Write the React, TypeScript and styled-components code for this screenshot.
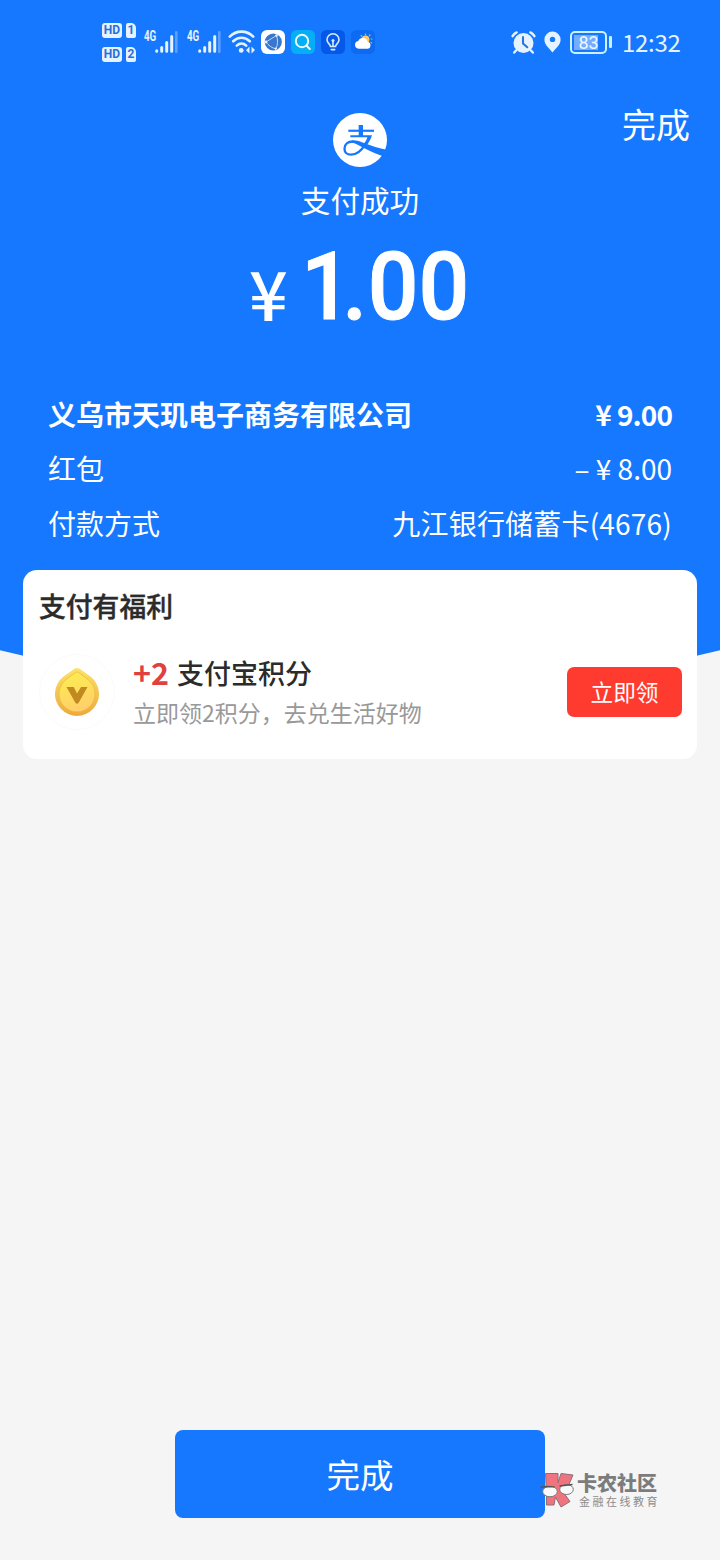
import React from "react";
import styled, { createGlobalStyle } from "styled-components";

const BLUE = "#1677ff";
const ICE = "#e4f3ff";

const Global = createGlobalStyle`
  * { box-sizing: border-box; }
  body {
    margin: 0;
    background: #f5f5f5;
    font-family: "Noto Sans CJK SC", "Noto Sans", sans-serif;
  }
`;

const Page = styled.div`
  position: relative;
  width: 720px;
  height: 1560px;
  display: flex;
  flex-direction: column;
  align-items: center;
  background: #f5f5f5;
  overflow: hidden;
`;

const Hero = styled.header`
  width: 100%;
  height: 695px;
  flex: none;
  background: ${BLUE};
  color: #fff;
  clip-path: circle(1500px at 50% -806px);
`;

const StatusBar = styled.div`
  height: 84px;
  padding: 0 40px 0 102px;
  display: flex;
  align-items: center;
  justify-content: space-between;
`;

const StatusGroup = styled.div<{ $gap: number }>`
  display: flex;
  align-items: center;
  gap: ${(p) => p.$gap}px;
`;

const SimStack = styled.div`
  display: flex;
  flex-direction: column;
  gap: 9px;
  margin-right: 7px;
`;

const SimRow = styled.div`
  display: flex;
  gap: 4px;
`;

const SimBadge = styled.span<{ $w: number; $notch?: boolean }>`
  width: ${(p) => p.$w}px;
  height: 15px;
  border-radius: ${(p) => (p.$notch ? "2px 5px 2px 2px" : "3px")};
  background: ${ICE};
  color: #2a6fdc;
  font: 700 12px/15px Roboto, sans-serif;
  text-align: center;
`;

const Signal = styled.div`
  display: flex;
  align-items: flex-start;
  height: 22px;
  width: 35px;
  margin-right: 8px;

  & + & {
    margin-right: 7px;
  }
`;

const Net = styled.span`
  width: 12px;
  font: 700 14px/11px Roboto, sans-serif;
  transform: translateX(1px) scaleX(0.7);
  transform-origin: 0 50%;
  color: ${ICE};
`;

const Clock = styled.span`
  width: 58px;
  margin-left: 2px;
  font-size: 24px;
  line-height: 28px;
  letter-spacing: -0.3px;
  color: ${ICE};
  white-space: nowrap;
`;

const Battery = styled.div`
  display: flex;
  align-items: center;
  gap: 2px;
`;

const BatteryShell = styled.div`
  width: 37px;
  height: 23px;
  padding: 2px;
  border: 2px solid #c9f1ff;
  border-radius: 5px;
`;

const BatteryFill = styled.div`
  width: 100%;
  height: 15px;
  background: linear-gradient(90deg, #74adff 0 84%, transparent 84%);
  color: #eef8ff;
  font: 400 18px/16px Roboto, sans-serif;
  text-align: center;
`;

const BatteryCap = styled.div`
  width: 3px;
  height: 12px;
  border-radius: 1px;
  background: #c9f1ff;
`;

const TopAction = styled.div`
  height: 29px;
  padding: 15px 30px 0 0;
  font-size: 34px;
  line-height: 50px;
  text-align: right;
`;

const Summary = styled.section`
  display: flex;
  flex-direction: column;
  align-items: center;
`;

const ResultText = styled.div`
  margin-top: 11px;
  font-size: 29.6px;
  line-height: 44px;
`;

const Amount = styled.div`
  display: flex;
  align-items: flex-end;
  height: 113px;
  width: 220px;
`;

const Yen = styled.span`
  width: 52px;
  margin: 0 13px 10px -1px;
  font: 500 68px/66px "Noto Sans CJK SC", sans-serif;
`;

const Figure = styled.span`
  display: flex;
  font: 500 95px/97px Roboto, sans-serif;
  -webkit-text-stroke: 1px #fff;
  transform: scaleX(0.94);
  transform-origin: 0 50%;
  white-space: nowrap;
`;

const Glyph = styled.span<{ $track?: number }>`
  letter-spacing: ${(p) => p.$track ?? 0}px;
`;

const Details = styled.dl`
  margin: 53px 48px 0;
`;

const DetailRow = styled.div<{ $strong?: boolean }>`
  display: flex;
  justify-content: space-between;
  height: 54.3px;
  font-size: 28px;
  line-height: 52px;
  font-weight: ${(p) => (p.$strong ? 700 : 400)};
`;

const Label = styled.dt`
  line-height: 53px;
`;
const Value = styled.dd<{ $track?: number }>`
  margin: 0;
  letter-spacing: ${(p) => p.$track ?? 0}px;
`;

const MiniYen = styled.span`
  display: inline-block;
  width: 28px;
  text-align: center;
`;

const Card = styled.section`
  position: relative;
  width: 674px;
  height: 189px;
  margin-top: -125px;
  padding: 16px 15px 0 16px;
  border-radius: 14px;
  background: #fff;
  flex: none;
`;

const CardTitle = styled.h2`
  margin: 0;
  font-size: 26.8px;
  line-height: 40px;
  font-weight: 500;
  color: #2b2b2b;
  -webkit-text-stroke: 0.4px #2b2b2b;
`;

const Reward = styled.div`
  display: flex;
  align-items: center;
  margin-top: 22px;
  height: 88px;
`;

const CoinFrame = styled.div`
  width: 76px;
  height: 76px;
  border-radius: 50%;
  border: 1px solid #fbfbfb;
  display: flex;
  align-items: center;
  justify-content: center;
`;

const RewardText = styled.div`
  flex: 1;
  padding-left: 18px;
`;

const RewardTitle = styled.div`
  display: flex;
  gap: 8px;
  height: 40px;
  font-size: 27px;
  line-height: 37px;
  font-weight: 500;
  color: #2b2b2b;
`;

const Plus = styled.span`
  color: #e04040;
  font-weight: 700;
  font-size: 30.5px;
  line-height: 37px;
`;

const RewardNote = styled.div`
  font-size: 23px;
  line-height: 36px;
  color: #999;
`;

const ClaimButton = styled.button`
  width: 115px;
  height: 50px;
  padding: 0;
  border: 0;
  border-radius: 7px;
  background: #ff3b30;
  color: #fff;
  font: 400 22.7px/48px "Noto Sans CJK SC", sans-serif;
`;

const DoneButton = styled.button`
  width: 370px;
  height: 88px;
  margin: auto 0 42px;
  padding: 0;
  border: 0;
  border-radius: 8px;
  background: ${BLUE};
  color: #fff;
  font: 400 33.5px/88px "Noto Sans CJK SC", sans-serif;
`;

const Watermark = styled.div`
  position: absolute;
  left: 540px;
  top: 1471px;
  display: flex;
  gap: 3px;
`;

const WatermarkName = styled.div`
  font: 900 20px/27px "Liberation Sans", "Noto Sans CJK SC", sans-serif;
  color: #7c7c7c;
`;

const WatermarkTag = styled.div`
  padding-left: 2px;
  font: 400 11px/8px "Liberation Sans", "Noto Sans CJK SC", sans-serif;
  letter-spacing: 2.5px;
  color: #8c8c8c;
  white-space: nowrap;
`;

const Bars = () => (
  <svg width="23" height="22" viewBox="0 0 23 22">
    <g stroke={ICE} strokeWidth="3" strokeLinecap="round">
      <path d="M1.7 19.8v.4M6.7 16.4v3.8M11.7 11.4v8.8M16.7 5.6v14.6" />
    </g>
    <rect x="20" y="0" width="2.6" height="22" rx="1" fill="#5ba0ff" />
  </svg>
);

const Wifi = () => (
  <svg width="27" height="24" viewBox="0 0 27 24">
    <g fill="none" stroke={ICE} strokeWidth="2.7" strokeLinecap="round">
      <path d="M1.8 6.6C8.5 0 18.5 0 25.2 6.6" />
      <path d="M5.2 11.2C10 6.6 17 6.6 21.8 11.2" />
      <path d="M8.8 15.6C11.6 12.9 15.4 12.9 18.2 15.6" />
    </g>
    <circle cx="13.2" cy="20.4" r="2.4" fill={ICE} />
    <path d="M21.5 16.5v7L18 20.2zM23.5 16.5v7l3.5-3.4z" fill={ICE} />
  </svg>
);

const Browser = () => (
  <svg width="24" height="24" viewBox="0 0 24 24">
    <rect width="24" height="24" rx="6" fill="#fff" />
    <circle cx="12.3" cy="12" r="8.6" fill="#3977cf" />
    <path
      d="M5 12L15.5 5.5C17 10 17 15 14.8 18.8C11 18 7.500 15.500 5 12z"
      stroke="#b8d8ff"
      strokeWidth="1"
      fill="none"
    />
    <g fill="#e8f3ff">
      <circle cx="5" cy="12" r="1.400" />
      <circle cx="15.500" cy="5.500" r="1.200" />
      <circle cx="14.800" cy="18.600" r="1.200" />
    </g>
  </svg>
);

const SearchApp = () => (
  <svg width="24" height="24" viewBox="0 0 24 24">
    <rect width="24" height="24" rx="5.500" fill="#05aef5" />
    <g fill="none" stroke="#e9faff" strokeWidth="2" strokeLinecap="round">
      <circle cx="11" cy="11" r="6.2" />
      <path d="M15.600 15.800L18.800 19" />
    </g>
  </svg>
);

const BulbApp = () => (
  <svg width="24" height="24" viewBox="0 0 24 24">
    <rect width="24" height="24" rx="5.500" fill="#0658e8" />
    <g fill="none" stroke="#d5ebff" strokeWidth="1.600" strokeLinecap="round">
      <path d="M9.500 16.500C9.500 14 6 13.500 6 9.800a6 6 0 0112 0c0 3.700-3.500 4.200-3.500 6.700z" />
      <path d="M10.300 19.600h3.400M12 11v5" />
    </g>
    <circle cx="12" cy="10.500" r="1.500" fill="#d5ebff" />
  </svg>
);

const WeatherApp = () => (
  <svg width="24" height="24" viewBox="0 0 24 24">
    <rect width="24" height="24" rx="5.500" fill="#0c6bf2" />
    <g stroke="#e0b878" strokeWidth="1.200" strokeLinecap="round">
      <path d="M14.500 4.500v-.4M18.500 5.500l.5-.6M20.300 9h.6M20 12.500l.5.400M10.500 6l-.4-.4" />
    </g>
    <circle cx="14.500" cy="9.500" r="3.900" fill="#ffc95a" />
    <path d="M7.500 18.800a3.900 3.900 0 01-.3-7.700 5 5 0 019.400.6 3.600 3.600 0 01-.3 7.100z" fill="#fff" />
  </svg>
);

const Alarm = () => (
  <svg width="25" height="23" viewBox="0 0 25 23">
    <circle cx="12.500" cy="12" r="10" fill={ICE} />
    <g fill="none" stroke={ICE} strokeWidth="2.400" strokeLinecap="round">
      <path d="M1.600 5.200C2.600 3.400 4 2.200 5.600 1.400M23.400 5.200C22.400 3.400 21 2.200 19.400 1.400M5 19.500L3.200 21.500M20 19.500l1.800 2" />
    </g>
    <path d="M12 6v6.500l4.300 3.800" fill="none" stroke="#2a73dc" strokeWidth="2" strokeLinecap="round" />
  </svg>
);

const Pin = () => (
  <svg width="18" height="22" viewBox="0 0 18 22">
    <path
      fillRule="evenodd"
      fill={ICE}
      d="M8.500.500a8.100 8.100 0 018.100 8.200c0 5.300-5.600 9.300-8.100 12.800C6 18 .4 14 .4 8.700A8.100 8.100 0 018.500.500zm0 5.200a2.700 2.700 0 100 5.400 2.700 2.700 0 000-5.400z"
    />
  </svg>
);

const PayLogo = () => (
  <svg width="54" height="54" viewBox="309 39 162 162">
    <circle cx="390" cy="120" r="81" fill="#fff" />
    <g fill={BLUE}>
      <path d="M386 75h13v34h-13z" />
      <path d="M355 89h77v6.500h-77z" />
      <path d="M361 105.500h65c-4 13-10 23-17 32l-9-5c6-7 10-13 12-21h-51z" />
      <path d="M366 121C378 120 390 124 402 129C424 138 448 145 470 149L457 168C438 162 418 152 400 143C386 136 376 129 365 128z" />
    </g>
    <path
      d="M406 133C394 152 380 164 363 164C350 164 343.500 156 343.500 146C343.500 133 354 124.500 368 124.500"
      fill="none"
      stroke={BLUE}
      strokeWidth="7"
    />
    <path d="M468 148l10 2-14 24-9-5z" fill={BLUE} />
  </svg>
);

const Coin = () => (
  <svg width="46" height="50" viewBox="0 0 46 50">
    <defs>
      <linearGradient id="rim" x1="0" y1="0" x2="0" y2="1">
        <stop offset="0" stopColor="#fbe36a" />
        <stop offset="1" stopColor="#eda93e" />
      </linearGradient>
      <linearGradient id="face" x1="0" y1="0" x2="0.3" y2="1">
        <stop offset="0" stopColor="#fdf04e" />
        <stop offset="1" stopColor="#ffd069" />
      </linearGradient>
    </defs>
    <path d="M20.800 1.600Q23 .2 25.200 1.600L36.500 9.600A22 22 0 1 1 9.500 9.600z" fill="url(#rim)" />
    <path d="M21.600 5.400Q23 4.500 24.400 5.400L34 12.600A18 18 0 1 1 12 12.600z" fill="url(#face)" stroke="#f1b83e" strokeWidth=".8" />
    <path d="M12.500 20h7.300L23 26.500 27 20h6.500L24.800 35.500q-1.800 2.500-3.600 0z" fill="#c08a20" />
  </svg>
);

const CommunityMark = () => (
  <svg width="34" height="37" viewBox="0 0 34 37">
    <g fill="#f07480" stroke="#8a6f74" strokeWidth="1">
      <path d="M5.500 2.500h12.500v9l3-9 12 1.500-6 14-3.500 3.500 6.500 9-9 5.500-5.500-10-1.500 8H6.500V22z" />
    </g>
    <g fill="#fafafa" stroke="#777" strokeWidth="1">
      <ellipse cx="10" cy="20.500" rx="7.300" ry="5.300" />
      <ellipse cx="26.500" cy="18.500" rx="6.800" ry="5" />
    </g>
    <path d="M.5 16.500l4-1 10 .3M19.500 15l13-1.500" fill="none" stroke="#555" strokeWidth="1.300" />
  </svg>
);

const sims = ["1", "2"];

export default function App() {
  return (
    <Page>
      <Global />
      <Hero>
        <StatusBar>
          <StatusGroup $gap={0}>
            <SimStack>
              {sims.map((n) => (
                <SimRow key={n}>
                  <SimBadge $w={20}>HD</SimBadge>
                  <SimBadge $w={10} $notch>{n}</SimBadge>
                </SimRow>
              ))}
            </SimStack>
            {sims.map((n) => (
              <Signal key={n}>
                <Net>4G</Net>
                <Bars />
              </Signal>
            ))}
            <StatusGroup $gap={6}>
              <Wifi />
              <Browser />
              <SearchApp />
              <BulbApp />
              <WeatherApp />
            </StatusGroup>
          </StatusGroup>
          <StatusGroup $gap={8}>
            <Alarm />
            <Pin />
            <Battery>
              <BatteryShell>
                <BatteryFill>83</BatteryFill>
              </BatteryShell>
              <BatteryCap />
            </Battery>
            <Clock>12:32</Clock>
          </StatusGroup>
        </StatusBar>
        <TopAction>完成</TopAction>
        <Summary>
          <PayLogo />
          <ResultText>支付成功</ResultText>
          <Amount>
            <Yen>¥</Yen>
            <Figure>
              <Glyph $track={-10}>1</Glyph>
              <Glyph $track={0.5}>.</Glyph>
              <Glyph>00</Glyph>
            </Figure>
          </Amount>
        </Summary>
        <Details>
          <DetailRow $strong>
            <Label>义乌市天玑电子商务有限公司</Label>
            <Value $track={-0.9}><MiniYen>¥</MiniYen>9.00</Value>
          </DetailRow>
          <DetailRow>
            <Label>红包</Label>
            <Value>–<MiniYen>¥</MiniYen>8.00</Value>
          </DetailRow>
          <DetailRow>
            <Label>付款方式</Label>
            <Value $track={0.2}>九江银行储蓄卡(4676)</Value>
          </DetailRow>
        </Details>
      </Hero>
      <Card>
        <CardTitle>支付有福利</CardTitle>
        <Reward>
          <CoinFrame>
            <Coin />
          </CoinFrame>
          <RewardText>
            <RewardTitle>
              <Plus>+2</Plus>
              <span>支付宝积分</span>
            </RewardTitle>
            <RewardNote>立即领2积分，去兑生活好物</RewardNote>
          </RewardText>
          <ClaimButton>立即领</ClaimButton>
        </Reward>
      </Card>
      <DoneButton>完成</DoneButton>
      <Watermark>
        <CommunityMark />
        <div>
          <WatermarkName>卡农社区</WatermarkName>
          <WatermarkTag>金融在线教育</WatermarkTag>
        </div>
      </Watermark>
    </Page>
  );
}
